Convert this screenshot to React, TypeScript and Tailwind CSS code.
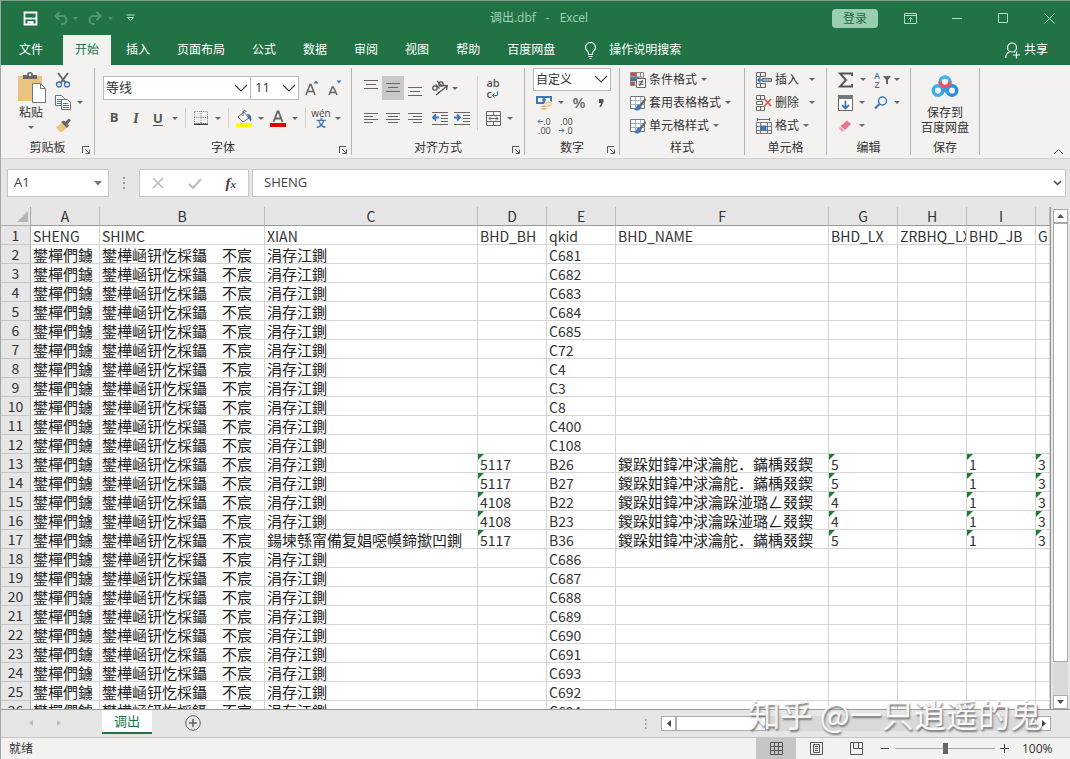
import type { ReactNode } from "react";
import clsx from "clsx";

const tabs = ["插入", "页面布局", "公式", "数据", "审阅", "视图", "帮助", "百度网盘"];

const columns = ["A", "B", "C", "D", "E", "F", "G", "H", "I", ""];

const headings = ["SHENG", "SHIMC", "XIAN", "BHD_BH", "qkid", "BHD_NAME", "BHD_LX", "ZRBHQ_LX", "BHD_JB", "GIS"];

const sheng = "鐢樿們鐪";
const shimc = "鐢樺崡钘忔棌鑷\u3000不宸";
const xian = "涓存江鍘";
const forest = "鍐跺姏鍏冲浗瀹舵．鏋楀叕鍥";
const geo = "鍐跺姏鍏冲浗瀹跺湴璐ㄥ叕鍥";

const plain = (id: string) => [sheng, shimc, xian, "", id, "", "", "", "", ""];
const reserve = (bh: string, id: string, name: string, lx: string, x = xian) => [
  sheng, shimc, x, bh, id, name, lx, "", "1", "3",
];

const rows = [
  headings,
  ...["C681", "C682", "C683", "C684", "C685", "C72", "C4", "C3", "C8", "C400", "C108"].map(plain),
  reserve("5117", "B26", forest, "5"),
  reserve("5117", "B27", forest, "5"),
  reserve("4108", "B22", geo, "4"),
  reserve("4108", "B23", geo, "4"),
  reserve("5117", "B36", forest, "5", "鍚堜綔甯備复娼噁幙鍗撳凹鍘"),
  ...["C686", "C687", "C688", "C689", "C690", "C691", "C693", "C692", "C694"].map(plain),
];

// columns whose numbers are stored as text
const flagged = [3, 6, 8, 9];

// columns that hold Chinese text below the heading row
const hanzi = [0, 1, 2, 5];

function Caret() {
  return (
    <svg width="6" height="3" viewBox="0 0 6 3" className="shrink-0 fill-[#666]">
      <path d="M0 0h6L3 3z" />
    </svg>
  );
}

function Chevron() {
  return (
    <svg width="14" height="9" viewBox="0 0 14 9" className="pointer-events-none mr-[2px] shrink-0 fill-none stroke-[#444]">
      <path d="M1 1l6 6 6-6" strokeWidth="1.200" />
    </svg>
  );
}

function Tool({ label, className, children }: { label: string; className?: string; children: ReactNode }) {
  return (
    <button type="button" aria-label={label} className={clsx("flex h-6 shrink-0 items-center justify-center", className ?? "w-[22px]")}>
      {children}
    </button>
  );
}

function Group({ label, className, launcher, children }: { label: string; className: string; launcher?: boolean; children: ReactNode }) {
  return (
    <section className={clsx("flex h-[87px] shrink-0 flex-col border-r border-[#b5b5b5]", className)}>
      <div className="flex h-[73px]">{children}</div>
      <div className="flex h-[14px] items-center">
        <span className="w-4" />
        <h2 className="flex-1 text-center leading-[14px]">{label}</h2>
        <span className="flex w-4 justify-center">
          {launcher && (
            <button type="button" aria-label={label + "设置"} className="pt-1">
              <svg width="8" height="8" viewBox="0 0 8 8" className="fill-none stroke-[#555]">
                <path d="M.5 7V.5H7M3 3l4 4M7.500 3.500v4h-4" />
              </svg>
            </button>
          )}
        </span>
      </div>
    </section>
  );
}

function Divider({ className }: { className: string }) {
  return <span className={clsx("w-px shrink-0 bg-[#d0d0d0]", className)} />;
}

function LinesIcon({ d }: { d: string }) {
  return (
    <svg width="16" height="16" viewBox="0 0 16 16" className="fill-none stroke-[#666]">
      <path d={d} />
    </svg>
  );
}

function TitleBar() {
  return (
    <div className="flex h-[34px] items-center text-[#a5d3b8]">
      <div className="flex flex-1 items-center pl-[22px]">
        <button type="button" aria-label="保存">
          <svg width="15" height="15" viewBox="0 0 15 15" className="fill-none stroke-white">
            <path d="M1.500 1.500h12v12h-12z" strokeWidth="1.800" />
            <path d="M2 7.500h11" strokeWidth="1.800" />
            <path d="M4.500 10h6v4h-3v-2h-1.500v2H4.500z" className="fill-white stroke-none" />
          </svg>
        </button>
        <button type="button" aria-label="撤消" className="ml-4 flex items-center gap-[5px]">
          <svg width="14" height="14" viewBox="0 0 14 14" className="fill-none stroke-[#53966f]" strokeWidth="2">
            <path d="M5.500 1L1.500 5l4 4M2 5h6.500a4 4 0 0 1 0 8H7" />
          </svg>
          <svg width="5" height="3" viewBox="0 0 5 3" className="fill-[#53966f]"><path d="M0 0h5L2.500 3z" /></svg>
        </button>
        <button type="button" aria-label="恢复" className="ml-[10px] flex items-center gap-[6px]">
          <svg width="14" height="14" viewBox="0 0 14 14" className="fill-none stroke-[#53966f]" strokeWidth="2">
            <path d="M8.500 1l4 4-4 4M12 5H5.500a4 4 0 0 0 0 8H7" />
          </svg>
          <svg width="5" height="3" viewBox="0 0 5 3" className="fill-[#53966f]"><path d="M0 0h5L2.500 3z" /></svg>
        </button>
        <button type="button" aria-label="自定义快速访问工具栏" className="ml-[13px]">
          <svg width="9" height="8" viewBox="0 0 9 8" className="fill-none stroke-[#b9e0c8]">
            <path d="M.5 1h8M1.500 3.500l3 3 3-3z" />
          </svg>
        </button>
      </div>
      <h1 className="flex gap-[10px]">
        <span>调出.dbf</span>
        <span>-</span>
        <span>Excel</span>
      </h1>
      <div className="flex flex-1 items-center justify-end pr-[15px]">
        <button type="button" className="h-[19px] w-[46px] rounded-sm bg-[#9bceb0] leading-[17px] text-[#1f6b41]">登录</button>
        <button type="button" aria-label="功能区显示选项" className="ml-[26px]">
          <svg width="13" height="11" viewBox="0 0 13 11" className="fill-none stroke-[#b4dcc4]">
            <path d="M.5 .5h12v10H.5zM.5 2.500h12M6.500 9V4.500M4.500 6.500l2-2 2 2" />
          </svg>
        </button>
        <button type="button" aria-label="最小化" className="ml-[35px]">
          <svg width="10" height="11" viewBox="0 0 10 11" className="stroke-[#b4dcc4]"><path d="M0 5.500h10" /></svg>
        </button>
        <button type="button" aria-label="最大化" className="ml-9">
          <svg width="10" height="10" viewBox="0 0 10 10" className="fill-none stroke-[#b4dcc4]"><path d="M.5 .5h9v9h-9z" /></svg>
        </button>
        <button type="button" aria-label="关闭" className="ml-9">
          <svg width="11" height="11" viewBox="0 0 11 11" className="stroke-[#b4dcc4]"><path d="M.5 .5l10 10M10.500 .5l-10 10" /></svg>
        </button>
      </div>
    </div>
  );
}

function TabStrip() {
  return (
    <nav className="flex h-[30px] items-stretch gap-[3px] pl-[6px] leading-7 text-white">
      <button type="button" className="mr-[5px] px-3">文件</button>
      <button type="button" className="bg-[#f3f2f1] px-3 text-[#217346]">开始</button>
      {tabs.map((tab) => (
        <button key={tab} type="button" className="px-3">{tab}</button>
      ))}
      <button type="button" className="ml-[14px] flex items-center gap-3">
        <svg width="13" height="17" viewBox="0 0 13 17" className="fill-none stroke-white">
          <path d="M4.500 12.500V11c0-1.500-3-2.500-3-5.500a5 5 0 0 1 10 0c0 3-3 4-3 5.500v1.500zM4.500 14.500h4M5.500 16.500h2" strokeWidth="1.100" />
        </svg>
        操作说明搜索
      </button>
      <button type="button" className="ml-auto flex items-center gap-1 pr-[22px]">
        <svg width="15" height="17" viewBox="0 0 15 17" className="fill-none stroke-white" strokeWidth="1.200">
          <circle cx="7" cy="5.500" r="4.500" />
          <path d="M.7 16c0-3.500 2-5.500 4.300-6.300M9 9.700l1 .6M11.500 9.500v7M8 13h7" />
        </svg>
        共享
      </button>
    </nav>
  );
}

function ClipboardGroup() {
  return (
    <Group label="剪贴板" launcher className="w-[94px]">
      <button type="button" className="ml-[14px] flex w-8 flex-col items-center pt-1">
        <svg width="29" height="31" viewBox="0 0 29 31">
          <path d="M1 4h24v25H1z" fill="#eac282" />
          <path d="M6 7V3h4a3 3 0 0 1 6 0h4v4z" fill="#666" />
          <circle cx="13" cy="2.800" r="1.200" fill="#f3f2f1" />
          <path d="M15.500 11.500h8l5 5v14h-13z" fill="#fff" stroke="#777" />
          <path d="M23.500 11.500v5h5" fill="none" stroke="#777" />
        </svg>
        <span className="leading-[20px]">粘贴</span>
        <span className="pt-[3px]"><Caret /></span>
      </button>
      <div className="ml-2 flex flex-col">
        <button type="button" aria-label="剪切" className="flex h-[23px] items-center">
          <svg width="16" height="16" viewBox="0 0 16 16" fill="none">
            <path d="M3 1l7.500 10M13 1L5.500 11" stroke="#666" strokeWidth="2" />
            <circle cx="4" cy="12.500" r="2.500" stroke="#3d78b5" strokeWidth="1.300" />
            <circle cx="12" cy="12.500" r="2.500" stroke="#3d78b5" strokeWidth="1.300" />
          </svg>
        </button>
        <button type="button" aria-label="复制" className="flex h-[23px] items-center gap-[6px]">
          <svg width="16" height="15" viewBox="0 0 16 15" fill="#fff" stroke="#5a6f88">
            <path d="M.5 .5h6l3 3v7h-9zM2 4.500h4M2 6.500h4M2 8.500h4" />
            <path d="M6.500 4.500h6l3 3v7h-9z" />
            <path d="M8 8.500h5M8 10.500h6M8 12.500h6" stroke="#3d78b5" />
          </svg>
          <Caret />
        </button>
        <button type="button" aria-label="格式刷" className="flex h-[23px] items-center">
          <svg width="16" height="15" viewBox="0 0 16 15">
            <path d="M1 9l6-4 5 5-5 4H5z" fill="#eac282" />
            <path d="M6 4l3-1.500 5 5-2 2.500zM10 4l4-3.500 1.800 1.800L13 6z" fill="#666" />
          </svg>
        </button>
      </div>
    </Group>
  );
}

function FontGroup() {
  return (
    <Group label="字体" launcher className="w-[257px]">
      <div className="flex flex-col gap-[6px] pt-2 pl-2">
        <div className="flex items-center">
          <label className="flex h-6 w-[148px] items-center border border-[#bbb] bg-white">
            <select aria-label="字体名称" className="min-w-0 flex-1 appearance-none bg-transparent pl-[2px] text-[13px] outline-none">
              <option>等线</option>
            </select>
            <Chevron />
          </label>
          <label className="flex h-6 w-12 items-center border border-l-0 border-[#bbb] bg-white">
            <select aria-label="字号" className="min-w-0 flex-1 appearance-none bg-transparent pl-1 text-[13px] outline-none">
              <option>11</option>
            </select>
            <Chevron />
          </label>
          <Tool label="增大字号" className="ml-[6px] w-[14px]">
            <svg width="14" height="16" viewBox="0 0 14 16" fill="none">
              <path d="M1 15L5 4.500h1L10 15M2.500 11.500h6" stroke="#666" strokeWidth="1.600" />
              <path d="M8.500 3.500l2.500-3 2.500 3z" fill="#3d78b5" />
            </svg>
          </Tool>
          <Tool label="减小字号" className="ml-[9px] w-[14px]">
            <svg width="14" height="16" viewBox="0 0 14 16" fill="none">
              <path d="M1 15l3.300-8h1L9 15M2.500 12.500h5" stroke="#666" strokeWidth="1.600" />
              <path d="M8.500 .5l2.500 3 2.500-3z" fill="#3d78b5" />
            </svg>
          </Tool>
        </div>
        <div className="flex items-center text-[#555]">
          <Tool label="加粗"><b className="text-[13px]">B</b></Tool>
          <Tool label="倾斜"><i className="font-['Liberation_Serif',serif] text-[15px] font-bold">I</i></Tool>
          <Tool label="下划线"><b className="text-[13px] leading-[15px] underline underline-offset-2">U</b></Tool>
          <Tool label="下划线样式" className="w-3"><Caret /></Tool>
          <Divider className="mr-1 ml-1 h-5" />
          <Tool label="边框">
            <svg width="14" height="14" viewBox="0 0 14 14" fill="none" stroke="#777">
              <path d="M.5 .5h13v12H.5zM7 0v13M0 6.500h14" strokeDasharray="1 1.200" />
              <path d="M0 13.300h14" strokeWidth="1.400" stroke="#444" />
            </svg>
          </Tool>
          <Tool label="边框样式" className="w-3"><Caret /></Tool>
          <Divider className="mr-1 ml-1 h-5" />
          <Tool label="填充颜色">
            <svg width="18" height="17" viewBox="0 0 18 17">
              <path d="M3 7l6-5 5 6-6 4z" fill="#fff" stroke="#666" />
              <path d="M8 6V2a1.500 1.500 0 0 1 3 0" fill="none" stroke="#666" />
              <path d="M12 4c4 0 5 3 4 8l-2-3z" fill="#4a6ea8" />
              <path d="M1 13h16v4H1z" fill="#ff0" />
            </svg>
          </Tool>
          <Tool label="选择填充颜色" className="w-3"><Caret /></Tool>
          <Tool label="字体颜色">
            <svg width="16" height="17" viewBox="0 0 16 17" fill="none">
              <path d="M3.500 12L7.500 1.500h1L12.500 12M5 8.500h6" stroke="#666" strokeWidth="1.800" />
              <path d="M0 13h16v4H0z" fill="#e00000" />
            </svg>
          </Tool>
          <Tool label="选择字体颜色" className="w-3"><Caret /></Tool>
          <Divider className="mr-1 ml-1 h-5" />
          <Tool label="拼音">
            <span className="flex flex-col items-center text-[10px] leading-[10px] text-[#444]">
              <span>wén</span>
              <span className="font-bold text-[#3d78b5]">文</span>
            </span>
          </Tool>
          <Tool label="拼音选项" className="w-3"><Caret /></Tool>
        </div>
      </div>
    </Group>
  );
}

function AlignGroup() {
  return (
    <Group label="对齐方式" launcher className="w-[173px]">
      <div className="flex w-[117px] flex-col gap-[6px] pt-2 pl-2">
        <div className="flex items-center">
          <Tool label="顶端对齐"><LinesIcon d="M1 0.500h14M3 4.500h10M1 8.500h14" /></Tool>
          <Tool label="垂直居中" className="w-[22px] bg-[#c8c8c8]"><LinesIcon d="M1 3.500h14M3 7.500h10M1 11.500h14" /></Tool>
          <Tool label="底端对齐"><LinesIcon d="M1 7.500h14M3 11.500h10M1 15.500h14" /></Tool>
          <Tool label="方向" className="ml-1 w-5">
            <svg width="18" height="16" viewBox="0 0 18 16" fill="none" stroke="#555" strokeWidth="1.300">
              <circle cx="4" cy="8" r="2.200" />
              <path d="M4.500 4.500l4 4M6 1l5 5M5 15L16 6M12 5.500l4.300 .2L15.500 10" />
              <circle cx="10" cy="4" r="2.200" />
            </svg>
          </Tool>
          <Tool label="方向选项" className="w-[10px]"><Caret /></Tool>
        </div>
        <div className="flex items-center">
          <Tool label="左对齐"><LinesIcon d="M1 3.500h14M1 6.500h9M1 9.500h14M1 12.500h9" /></Tool>
          <Tool label="居中"><LinesIcon d="M1 3.500h14M3 6.500h10M1 9.500h14M3 12.500h10" /></Tool>
          <Tool label="右对齐"><LinesIcon d="M1 3.500h14M6 6.500h9M1 9.500h14M6 12.500h9" /></Tool>
          <Tool label="减少缩进量" className="ml-[3px] w-[22px]">
            <svg width="16" height="14" viewBox="0 0 16 14" fill="none" stroke="#666">
              <path d="M0 1.500h16M9 4.500h7M9 7.500h7M9 10.500h7M0 13.500h16" />
              <path d="M1 6.500h6M4 3.500l-3 3 3 3" stroke="#3d78b5" strokeWidth="1.800" />
            </svg>
          </Tool>
          <Tool label="增加缩进量">
            <svg width="16" height="14" viewBox="0 0 16 14" fill="none" stroke="#666">
              <path d="M0 1.500h16M9 4.500h7M9 7.500h7M9 10.500h7M0 13.500h16" />
              <path d="M0 6.500h6M3 3.500l3 3-3 3" stroke="#3d78b5" strokeWidth="1.800" />
            </svg>
          </Tool>
        </div>
      </div>
      <Divider className="mt-2 ml-2 h-[54px]" />
      <div className="flex flex-col gap-[6px] pt-2 pl-1">
        <Tool label="自动换行">
          <span className="flex flex-col text-left text-[11px] leading-[11px] font-semibold text-[#555]">
            <span>ab</span>
            <span className="flex items-end">
              c
              <svg width="6" height="8" viewBox="0 0 6 8" fill="none" stroke="#3d78b5"><path d="M5.500 0v4.500h-5M2.500 2.500l-2 2 2 2" /></svg>
            </span>
          </span>
        </Tool>
        <div className="flex">
          <Tool label="合并后居中">
            <svg width="15" height="15" viewBox="0 0 15 15" fill="none" stroke="#666">
              <path d="M.5 .5h14v14H.5zM0 4.500h15M0 10.500h15M7.500 0v4.500M7.500 10.500V15M3 7.500h9M5 5.500l-2 2 2 2M10 5.500l2 2-2 2" />
            </svg>
          </Tool>
          <Tool label="合并选项" className="w-3"><Caret /></Tool>
        </div>
      </div>
    </Group>
  );
}

function NumberGroup() {
  return (
    <Group label="数字" launcher className="w-[95px]">
      <div className="flex flex-col pl-2">
        <label className="flex h-[23px] w-[78px] items-center border border-[#bbb] bg-white">
          <select aria-label="数字格式" className="min-w-0 flex-1 appearance-none bg-transparent pl-[2px] outline-none">
            <option>自定义</option>
          </select>
          <Chevron />
        </label>
        <div className="flex h-[23px] items-center">
          <Tool label="会计数字格式">
            <svg width="17" height="16" viewBox="0 0 17 16">
              <path d="M0 1h16v8H0z" fill="#3d78b5" />
              <path d="M2 3h12v4H2z" fill="#fff" />
              <circle cx="8" cy="5" r="2" fill="#3d78b5" />
              <ellipse cx="12.500" cy="9" rx="3.800" ry="3" fill="#eac282" stroke="#f3f2f1" />
              <ellipse cx="8" cy="12.500" rx="3.800" ry="3" fill="#eac282" stroke="#f3f2f1" />
              <path d="M5 12.500h6M10 9h5" stroke="#fff" />
            </svg>
          </Tool>
          <Tool label="会计选项" className="w-3"><Caret /></Tool>
          <Tool label="百分比样式" className="w-6"><span className="text-[15px] font-semibold text-[#666]">%</span></Tool>
          <Tool label="千位分隔样式" className="w-5">
            <svg width="5" height="8" viewBox="0 0 5 8" className="fill-[#555]"><path d="M0 0h4.500v3L2 8H.5L2 4H0z" /></svg>
          </Tool>
        </div>
        <div className="flex h-[23px] items-center text-[9px] leading-[9px] text-[#444]">
          <Tool label="增加小数位数">
            <span className="flex flex-col items-end">
              <span className="flex items-center">
                <svg width="6" height="5" viewBox="0 0 6 5" fill="none" stroke="#3d78b5"><path d="M6 2.500H1M3 .5l-2 2 2 2" /></svg>.0
              </span>
              <span>.00</span>
            </span>
          </Tool>
          <Tool label="减少小数位数">
            <span className="flex flex-col items-end">
              <span>.00</span>
              <span className="flex items-center">
                <svg width="6" height="5" viewBox="0 0 6 5" fill="none" stroke="#3d78b5"><path d="M0 2.500h5M3 .5l2 2-2 2" /></svg>.0
              </span>
            </span>
          </Tool>
        </div>
      </div>
    </Group>
  );
}

function RowButton({ icon, label, className }: { icon: ReactNode; label: string; className?: string }) {
  return (
    <button type="button" className="flex h-[23px] items-center whitespace-nowrap">
      {icon}
      <span className={clsx("pl-[3px]", className ?? "pr-1")}>{label}</span>
      <Caret />
    </button>
  );
}

function BrushTable() {
  return (
    <svg width="16" height="16" viewBox="0 0 16 16" fill="none">
      <path d="M.5 1.500h14v12H.5z" fill="#fff" stroke="#777" />
      <path d="M1 5.500h13M1 9.500h13M5.500 2v11M10.500 2v11" stroke="#9fb8cf" />
      <path d="M15.500 3L9 10l2 2 5-7z" fill="#666" />
      <path d="M9 9.500c-3 0-2 4-5 5.500 4 1 7 0 7.500-3z" fill="#3d78b5" />
    </svg>
  );
}

function StyleGroup() {
  return (
    <Group label="样式" className="w-[125px]">
      <div className="flex flex-col pl-[10px]">
        <RowButton
          label="条件格式"
          icon={
            <svg width="16" height="16" viewBox="0 0 16 16" fill="none">
              <path d="M0 .5h6v4H0z" fill="#c0504d" />
              <path d="M0 5h9v4H0z" fill="#3d78b5" />
              <path d="M0 9.500h5v4H0z" fill="#c0504d" />
              <path d="M.5 .5h13v5M.5 .5v13h5M0 5h14M6.500 0v6M10.500 0v5" stroke="#888" />
              <path d="M6.500 6.500h9v9h-9z" fill="#fff" stroke="#666" />
              <path d="M8.500 9.800h5M8.500 12.200h5M12.500 8l-3 6" stroke="#444" />
            </svg>
          }
        />
        <RowButton label="套用表格格式" icon={<BrushTable />} />
        <RowButton label="单元格样式" icon={<BrushTable />} />
      </div>
    </Group>
  );
}

function CellsGroup() {
  return (
    <Group label="单元格" className="w-[82px]">
      <div className="flex flex-col pl-[11px]">
        <RowButton
          label="插入"
          className="pr-[10px]"
          icon={
            <svg width="16" height="16" viewBox="0 0 16 16" fill="none" stroke="#666">
              <path d="M.5 .5h9v4h-9zM4.500 0v5M.5 11.500h9v4h-9zM4.500 11v5M.5 5v6" />
              <path d="M6.500 6.500h9v3h-9z" fill="#9dbcd8" />
              <path d="M2 8h5M4.500 5.500L2 8l2.500 2.500" stroke="#3d78b5" strokeWidth="1.500" />
            </svg>
          }
        />
        <RowButton
          label="删除"
          className="pr-[10px]"
          icon={
            <svg width="16" height="16" viewBox="0 0 16 16" fill="none" stroke="#666">
              <path d="M.5 .5h8v4h-8zM4.500 0v5M.5 11.500h8v4h-8zM4.500 11v5M.5 6.500h6v3h-6z" />
              <path d="M8.500 4l6.500 7M15 4l-6.500 7" stroke="#d9543f" strokeWidth="1.600" />
            </svg>
          }
        />
        <RowButton
          label="格式"
          icon={
            <svg width="16" height="16" viewBox="0 0 16 16" fill="none" stroke="#777">
              <path d="M.5 4.500h15v11H.5zM0 8.500h16M0 12.500h16M4.500 4v12M11.500 4v12" />
              <path d="M5 8h5v4H5z" fill="#3d78b5" stroke="#3d78b5" />
              <path d="M1 1.500h13M1.500 0v3M13.500 0v3" stroke="#3d78b5" />
            </svg>
          }
        />
      </div>
    </Group>
  );
}

function EditGroup() {
  return (
    <Group label="编辑" className="w-[84px]">
      <div className="grid grid-cols-[36px_30px] grid-rows-[23px_23px_23px] pl-[11px]">
        <button type="button" aria-label="自动求和" className="flex items-center gap-[6px]">
          <svg width="16" height="16" viewBox="0 0 16 16" fill="none" stroke="#555" strokeWidth="2">
            <path d="M14 4V1.500H2l6 6.500-6 6.500h12V12" />
          </svg>
          <Caret />
        </button>
        <button type="button" aria-label="排序和筛选" className="flex items-center gap-[3px]">
          <span className="flex flex-col text-[9px] leading-[9px] font-semibold">
            <span className="text-[#3d78b5]">A</span>
            <span className="text-[#8a4fa8]">Z</span>
          </span>
          <svg width="8" height="8" viewBox="0 0 8 8" className="fill-[#666]"><path d="M0 0h8L5 4v4H3V4z" /></svg>
          <Caret />
        </button>
        <button type="button" aria-label="填充" className="flex items-center gap-[6px]">
          <svg width="15" height="16" viewBox="0 0 15 16" fill="none">
            <path d="M.5 .5h14v15H.5z" fill="#fff" stroke="#666" />
            <path d="M0 0h15v4H0z" fill="#777" />
            <path d="M7.500 5.500v8M4 10l3.500 3.500L11 10" stroke="#3d78b5" strokeWidth="1.800" />
          </svg>
          <Caret />
        </button>
        <button type="button" aria-label="查找和选择" className="flex items-center gap-[6px]">
          <svg width="14" height="14" viewBox="0 0 14 14" fill="none" stroke="#3d78b5">
            <circle cx="8.500" cy="5" r="4" strokeWidth="1.500" />
            <path d="M5.500 8L1 12.500" strokeWidth="2.200" />
          </svg>
          <Caret />
        </button>
        <button type="button" aria-label="清除" className="flex items-center gap-[7px]">
          <svg width="14" height="14" viewBox="0 0 14 14">
            <path d="M9 1.500L13 5l-6 6-4.500-4z" fill="#e8758a" />
            <path d="M2 7.500L6.500 11.500l-2 1.500L1 10z" fill="#f0a3b0" />
          </svg>
          <Caret />
        </button>
      </div>
    </Group>
  );
}

function SaveGroup() {
  return (
    <Group label="保存" className="w-[69px]">
      <button type="button" className="flex w-full flex-col items-center pt-[7px] leading-[15px]">
        <svg width="28" height="24" viewBox="0 0 28 24" fill="none" strokeWidth="3.400">
          <circle cx="7" cy="15.500" r="4.800" stroke="#35b0ee" />
          <circle cx="21" cy="15.500" r="4.800" stroke="#2b8fdc" />
          <circle cx="14" cy="7" r="5" stroke="#3fb2ea" />
          <path d="M11 11.500l6.500 7M17 11.500l-6.500 7" stroke="#3a9be2" strokeWidth="3" />
          <path d="M9 6.500a5 5 0 1 0 10 0" stroke="#ee4f68" />
        </svg>
        <span className="pt-[6px]">保存到</span>
        <span>百度网盘</span>
      </button>
    </Group>
  );
}

function FormulaBar() {
  return (
    <div className="flex items-center pt-[10px] pr-1 pb-[10px] pl-[6px] text-[13px] text-[#444]">
      <div className="flex h-7 w-[102px] items-center border border-[#c6c6c6] bg-white pr-[6px]">
        <input aria-label="名称框" defaultValue="A1" className="min-w-0 flex-1 bg-transparent pl-[6px] outline-none" />
        <svg width="8" height="5" viewBox="0 0 8 5" className="fill-[#777]"><path d="M0 0h8L4 4.500z" /></svg>
      </div>
      <svg width="30" height="12" viewBox="0 0 30 12" className="fill-[#999]">
        <path d="M14 0h2v2h-2zM14 5h2v2h-2zM14 10h2v2h-2z" />
      </svg>
      <div className="flex h-7 w-[110px] items-center justify-between border border-[#c6c6c6] bg-white pr-3 pl-3">
        <button type="button" aria-label="取消">
          <svg width="12" height="12" viewBox="0 0 12 12" className="stroke-[#bbb]"><path d="M1 1l10 10M11 1L1 11" strokeWidth="1.600" /></svg>
        </button>
        <button type="button" aria-label="输入">
          <svg width="14" height="11" viewBox="0 0 14 11" className="fill-none stroke-[#bbb]"><path d="M1 6l4 4 8-9" strokeWidth="2" /></svg>
        </button>
        <button type="button" aria-label="插入函数" className="font-['Liberation_Serif',serif] text-[15px] font-bold italic">
          f<span className="text-[11px]">x</span>
        </button>
      </div>
      <div className="ml-[3px] flex h-7 flex-1 items-center border border-[#c6c6c6] bg-white pr-[3px]">
        <input aria-label="编辑栏" defaultValue="SHENG" className="min-w-0 flex-1 bg-transparent pl-[11px] outline-none" />
        <svg width="9" height="6" viewBox="0 0 9 6" className="fill-none stroke-[#444]"><path d="M1 1l3.500 3.500L8 1" strokeWidth="1.500" /></svg>
      </div>
    </div>
  );
}

function Sheet() {
  return (
    <div className="flex min-h-0 flex-1">
      <div className="min-w-0 flex-1 overflow-hidden border-r border-[#999] bg-white">
        <table className="w-full table-fixed border-separate border-spacing-0 font-['Noto_Sans_CJK_SC',sans-serif] text-[#333]">
          <colgroup>
            <col className="w-[30px]" />
            <col className="w-[69px]" />
            <col className="w-[165px]" />
            <col className="w-[213px]" />
            <col className="w-[69px]" />
            <col className="w-[69px]" />
            <col className="w-[213px]" />
            <col className="w-[69px]" />
            <col className="w-[69px]" />
            <col className="w-[69px]" />
            <col />
          </colgroup>
          <thead>
            <tr className="h-[19px] bg-[#e6e6e6]">
              <th className="border-r border-b border-[#ababab] p-0">
                <svg width="26" height="14" viewBox="0 0 26 14" className="ml-auto fill-[#b4b4b4]"><path d="M24 2v11H13z" /></svg>
              </th>
              {columns.map((column, i) => (
                <th key={i} scope="col" className="border-r border-b border-r-[#bcbcbc] border-b-[#999] p-0 text-[14px] leading-[18px] font-normal">
                  {column}
                </th>
              ))}
            </tr>
          </thead>
          <tbody>
            {rows.map((row, r) => (
              <tr key={r} className="h-[19px]">
                <th scope="row" className="border-r border-b border-r-[#ababab] border-b-[#c6c6c6] bg-[#e6e6e6] p-0 text-[14px] leading-[18px] font-normal">
                  {r + 1}
                </th>
                {row.map((cell, c) => (
                  <td key={c} className="relative border-r border-b border-[#d4d4d4] p-0">
                    {r > 0 && cell && flagged.includes(c) && (
                      <svg width="6" height="6" viewBox="0 0 6 6" className="absolute top-0 left-0 fill-[#1e7b34]"><path d="M0 0h6L0 6z" /></svg>
                    )}
                    <div
                      className={clsx(
                        "h-[18px] overflow-x-clip pl-[2px] leading-[20px] whitespace-nowrap",
                        r > 0 && hanzi.includes(c) ? "text-[15px] text-[#222]" : "text-[14px]",
                      )}
                    >
                      {cell}
                    </div>
                  </td>
                ))}
              </tr>
            ))}
          </tbody>
        </table>
      </div>
      <div className="flex w-[19px] flex-col bg-[#e6e6e6] pt-[2px] pr-[2px] pl-[2px]">
        <button type="button" aria-label="向上滚动" className="flex h-[14px] items-center justify-center border border-[#ababab] bg-white">
          <svg width="7" height="4" viewBox="0 0 7 4" className="fill-[#555]"><path d="M0 4h7L3.500 0z" /></svg>
        </button>
        <div className="flex flex-1 flex-col bg-[#d9d9d9]">
          <div className="h-[93%] border border-[#ababab] bg-white" />
        </div>
        <button type="button" aria-label="向下滚动" className="flex h-[14px] items-center justify-center border border-[#ababab] bg-white">
          <svg width="7" height="4" viewBox="0 0 7 4" className="fill-[#555]"><path d="M0 0h7L3.500 4z" /></svg>
        </button>
      </div>
    </div>
  );
}

function SheetTabs() {
  return (
    <div className="flex h-[28px] items-start border-t border-[#999]">
      <div className="flex h-[26px] w-[101px] items-center gap-6 pl-7">
        <svg width="4" height="6" viewBox="0 0 4 6" className="fill-[#bbb]"><path d="M4 0v6L0 3z" /></svg>
        <svg width="4" height="6" viewBox="0 0 4 6" className="fill-[#bbb]"><path d="M0 0v6l4-3z" /></svg>
      </div>
      <button type="button" className="h-6 w-[50px] border-b-2 border-[#217346] bg-white text-[13px] leading-[22px] text-[#217346]">调出</button>
      <button type="button" aria-label="新工作表" className="ml-[33px] pt-[5px]">
        <svg width="16" height="16" viewBox="0 0 16 16" fill="none" stroke="#666">
          <circle cx="8" cy="8" r="7.300" />
          <path d="M8 4v8M4 8h8" strokeWidth="1.600" />
        </svg>
      </button>
      <div className="ml-auto flex w-[406px] items-center pt-[6px]">
        <svg width="16" height="10" viewBox="0 0 16 10" className="fill-[#999]"><path d="M0 0h1.500v2H0zM0 4h1.500v2H0zM0 8h1.500v2H0z" /></svg>
        <button type="button" aria-label="向左滚动" className="flex h-[15px] w-[15px] items-center justify-center border border-[#ababab] bg-white">
          <svg width="4" height="7" viewBox="0 0 4 7" className="fill-[#444]"><path d="M4 0v7L0 3.500z" /></svg>
        </button>
        <div className="flex h-[15px] flex-1 bg-[#d9d9d9]">
          <div className="w-1/4 border border-[#ababab] bg-white" />
        </div>
        <button type="button" aria-label="向右滚动" className="flex h-[15px] w-[15px] items-center justify-center border border-[#ababab] bg-white">
          <svg width="4" height="7" viewBox="0 0 4 7" className="fill-[#444]"><path d="M0 0v7l4-3.500z" /></svg>
        </button>
      </div>
      <span className="w-[19px]" />
    </div>
  );
}

function StatusBar() {
  return (
    <footer className="flex h-[22px] items-center border-t border-[#c6c6c6] bg-[#f3f2f1] pr-4 pl-2">
      <span className="flex-1">就绪</span>
      <button type="button" aria-label="普通" className="flex h-[21px] w-10 items-center justify-center bg-[#c6c6c6]">
        <svg width="13" height="13" viewBox="0 0 13 13" fill="none" stroke="#555"><path d="M.5 .5h12v12H.5zM4.500 0v13M8.500 0v13M0 4.500h13M0 8.500h13" /></svg>
      </button>
      <button type="button" aria-label="页面布局" className="flex h-[21px] w-10 items-center justify-center">
        <svg width="13" height="13" viewBox="0 0 13 13" fill="none" stroke="#555"><path d="M.5 .5h12v12H.5zM3.500 2.500h6v8h-6zM5 4.500h3M5 6.500h3M5 8.500h3" /></svg>
      </button>
      <button type="button" aria-label="分页预览" className="flex h-[21px] w-10 items-center justify-center">
        <svg width="13" height="13" viewBox="0 0 13 13" fill="none" stroke="#555"><path d="M.5 .5h12v12H.5zM3.500 0v6.500h5V0M8.500 6.500h4" /></svg>
      </button>
      <button type="button" aria-label="缩小" className="ml-[5px]">
        <svg width="9" height="9" viewBox="0 0 9 9" stroke="#444"><path d="M0 4.500h8" /></svg>
      </button>
      <input
        type="range"
        aria-label="缩放"
        min={10}
        max={190}
        defaultValue={100}
        className="mx-[5px] h-px w-[100px] appearance-none bg-[#aaa] [&::-webkit-slider-thumb]:h-[11px] [&::-webkit-slider-thumb]:w-[5px] [&::-webkit-slider-thumb]:appearance-none [&::-webkit-slider-thumb]:bg-[#666]"
      />
      <button type="button" aria-label="放大">
        <svg width="9" height="9" viewBox="0 0 9 9" stroke="#444"><path d="M0 4.500h9M4.500 0v9" /></svg>
      </button>
      <span className="ml-[13px] w-8">100%</span>
    </footer>
  );
}

export default function App() {
  return (
    <div className="relative flex h-screen flex-col overflow-hidden border-l border-[#a0a8a3] bg-[#e6e6e6] font-['Open_Sans','Noto_Sans_CJK_SC',sans-serif] text-[12px] text-[#333]">
      <header className="border-t border-[#7fa08c] bg-[#217346]">
        <TitleBar />
        <TabStrip />
      </header>
      <div className="flex border-b border-[#d2d2d2] bg-[#f3f2f1] pt-[3px] pb-[3px]">
        <ClipboardGroup />
        <FontGroup />
        <AlignGroup />
        <NumberGroup />
        <StyleGroup />
        <CellsGroup />
        <EditGroup />
        <SaveGroup />
        <button type="button" aria-label="折叠功能区" className="ml-auto self-end pr-[6px]">
          <svg width="11" height="7" viewBox="0 0 11 7" className="fill-none stroke-[#555]"><path d="M1 6l4.500-4.500L10 6" /></svg>
        </button>
      </div>
      <FormulaBar />
      <Sheet />
      <SheetTabs />
      <StatusBar />
      <p className="pointer-events-none absolute right-7 bottom-[26px] font-['Noto_Sans_CJK_SC',sans-serif] text-[32px] leading-[40px] whitespace-nowrap text-white/90 [text-shadow:1px_2px_2px_#777]">
        知乎 @一只逍遥的鬼
      </p>
    </div>
  );
}
